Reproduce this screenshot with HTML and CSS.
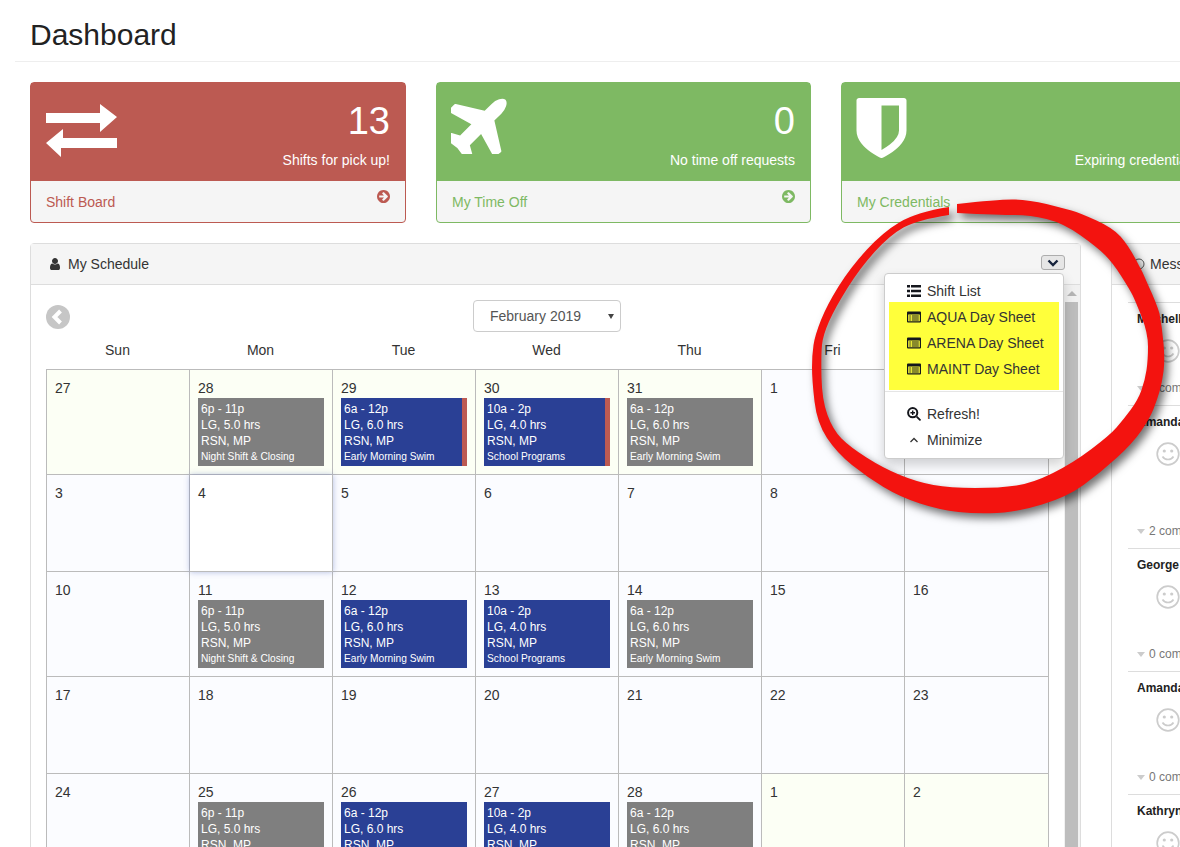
FILE: index.html
```html
<!DOCTYPE html>
<html lang="en">
<head>
    <meta charset="UTF-8">
    <title>Dashboard</title>
    <link rel="stylesheet" href="styles.css">
</head>
<body>
    <div class="page">
        <h1 class="page-title">Dashboard</h1>

        <div class="cards">
            <div class="card card-red">
                <div class="card-head">
                    <svg class="icon-exchange" viewBox="0 0 71 53"><path d="M0 9H54V0L71 13 54 28V19H0ZM71 34H17V25L0 39 15 53V44H71Z"/></svg>
                    <div class="card-info">
                        <div class="card-num">13</div>
                        <div class="card-label">Shifts for pick up!</div>
                    </div>
                </div>
                <div class="card-foot">
                    <span>Shift Board</span>
                    <svg class="icon-go" viewBox="128 128 1536 1536"><path fill-rule="evenodd" d="M1413 896q0-27-18-45l-91-91-362-362q-18-18-45-18t-45 18l-91 91q-18 18-18 45t18 45l189 189h-502q-26 0-45 19t-19 45v128q0 26 19 45t45 19h502l-189 189q-19 19-19 45t19 45l91 91q18 18 45 18t45-18l362-362 91-91q18-18 18-45zm251 0q0 209-103 385.500t-279.500 279.500-385.500 103-385.500-103-279.500-279.500-103-385.500 103-385.500 279.500-279.500 385.500-103 385.500 103 279.500 279.500 103 385.500z"/></svg>
                </div>
            </div>
            <div class="card card-green">
                <div class="card-head">
                    <svg class="icon-plane" viewBox="120 120 1290 1290"><path d="M1376 160q44 52 12 148t-108 172l-161 161 160 696q5 19-12 33l-128 96q-7 6-19 6-4 0-7-1-15-3-21-16l-279-508-259 259 53 194q5 17-8 31l-96 96q-9 9-23 9h-2q-15-2-24-13l-189-252-252-189q-11-7-13-23-1-13 9-25l96-97q9-9 23-9 6 0 8 1l194 53 259-259-508-279q-14-8-17-24-2-16 9-27l128-128q14-13 30-8l665 159 160-160q76-76 172-108t148 12z"/></svg>
                    <div class="card-info">
                        <div class="card-num">0</div>
                        <div class="card-label">No time off requests</div>
                    </div>
                </div>
                <div class="card-foot">
                    <span>My Time Off</span>
                    <svg class="icon-go" viewBox="128 128 1536 1536"><path fill-rule="evenodd" d="M1413 896q0-27-18-45l-91-91-362-362q-18-18-45-18t-45 18l-91 91q-18 18-18 45t18 45l189 189h-502q-26 0-45 19t-19 45v128q0 26 19 45t45 19h502l-189 189q-19 19-19 45t19 45l91 91q18 18 45 18t45-18l362-362 91-91q18-18 18-45zm251 0q0 209-103 385.500t-279.500 279.500-385.500 103-385.500-103-279.500-279.500-103-385.500 103-385.500 279.500-279.500 385.500-103 385.500 103 279.500 279.500 103 385.500z"/></svg>
                </div>
            </div>
            <div class="card card-green">
                <div class="card-head">
                    <svg class="icon-shield" viewBox="256 128 1280 1536"><path d="M1344 960v-640h-448v1137q119-63 213-137 235-184 235-360zm192-768v768q0 86-33.500 170.500t-83 150-118 127.500-126.500 103-121 77.500-89.500 49.500-42.500 20q-12 6-26 6t-26-6q-16-7-42.500-20t-89.500-49.500-121-77.500-126.500-103-118-127.500-83-150-33.500-170.500v-768q0-26 19-45t45-19h1152q26 0 45 19t19 45z"/></svg>
                    <div class="card-info">
                        <div class="card-num">0</div>
                        <div class="card-label">Expiring credentials</div>
                    </div>
                </div>
                <div class="card-foot">
                    <span>My Credentials</span>
                </div>
            </div>
        </div>

        <div class="panels">
            <div class="panel panel-schedule">
                <div class="panel-head">
                    <svg class="icon-user" viewBox="256 128 1280 1536"><path d="M1536 1399q0 109-62.500 187t-150.500 78h-854q-88 0-150.500-78t-62.500-187q0-85 8.500-160.500t31.500-152 58.500-131 94-89 134.500-34.500q131 128 313 128t313-128q76 0 134.500 34.500t94 89 58.500 131 31.500 152 8.500 160.500zm-256-887q0 159-112.500 271.500t-271.500 112.500-271.500-112.500-112.500-271.500 112.500-271.500 271.500-112.500 271.500 112.500 112.500 271.500z"/></svg>
                    <span>My Schedule</span>
                    <button class="collapse-btn"><svg viewBox="0 0 12 8"><path d="M1.500 1.500 6 6l4.500-4.500" /></svg></button>
                </div>

                <div class="menu">
                    <div class="menu-item">
                        <svg class="menu-icon" viewBox="0 0 14 12"><path d="M0 0h3v2.500H0zM4 0h10v2.500H4zM0 4.700h3v2.500H0zM4 4.700h10v2.500H4zM0 9.400h3v2.500H0zM4 9.400h10v2.500H4z"/></svg>
                        Shift List
                    </div>
                    <div class="menu-highlight">
                        <div class="menu-item">
                            <svg class="menu-icon" viewBox="0 0 14 11"><path fill-rule="evenodd" d="M1 0h12a1 1 0 0 1 1 1v9a1 1 0 0 1-1 1H1a1 1 0 0 1-1-1V1a1 1 0 0 1 1-1zM1.200 3v6.800h11.600V3z"/><path d="M2.300 4h1.500v1H2.300zM4.800 4h7v1h-7zM2.300 6h1.500v1H2.300zM4.800 6h7v1h-7zM2.300 8h1.500v1H2.300zM4.800 8h7v1h-7z"/></svg>
                            AQUA Day Sheet
                        </div>
                        <div class="menu-item">
                            <svg class="menu-icon" viewBox="0 0 14 11"><path fill-rule="evenodd" d="M1 0h12a1 1 0 0 1 1 1v9a1 1 0 0 1-1 1H1a1 1 0 0 1-1-1V1a1 1 0 0 1 1-1zM1.200 3v6.800h11.600V3z"/><path d="M2.300 4h1.500v1H2.300zM4.800 4h7v1h-7zM2.300 6h1.500v1H2.300zM4.800 6h7v1h-7zM2.300 8h1.500v1H2.300zM4.800 8h7v1h-7z"/></svg>
                            ARENA Day Sheet
                        </div>
                        <div class="menu-item">
                            <svg class="menu-icon" viewBox="0 0 14 11"><path fill-rule="evenodd" d="M1 0h12a1 1 0 0 1 1 1v9a1 1 0 0 1-1 1H1a1 1 0 0 1-1-1V1a1 1 0 0 1 1-1zM1.200 3v6.800h11.600V3z"/><path d="M2.300 4h1.500v1H2.300zM4.800 4h7v1h-7zM2.300 6h1.500v1H2.300zM4.800 6h7v1h-7zM2.300 8h1.500v1H2.300zM4.800 8h7v1h-7z"/></svg>
                            MAINT Day Sheet
                        </div>
                    </div>
                    <div class="menu-divider"></div>
                    <div class="menu-item">
                        <svg class="menu-icon icon-search" viewBox="0 0 14 14"><circle cx="5.700" cy="5.700" r="4.600" class="search-ring"/><path d="M3.400 5h4.600v1.400H3.400zM5 3.400h1.400v4.600H5zM9 10.200l1.300-1.300 3.300 3.300a.9.9 0 0 1-1.300 1.300z"/></svg>
                        Refresh!
                    </div>
                    <div class="menu-item">
                        <svg class="menu-icon icon-up" viewBox="0 0 14 12"><path d="M3.500 8 7 4.500 10.500 8"/></svg>
                        Minimize
                    </div>
                </div>

                <div class="panel-body">
                    <div class="calendar">
                        <div class="cal-top">
                            <svg class="icon-prev" viewBox="0 0 24 24"><circle cx="12" cy="12" r="12"/><path d="M14.500 6 8.500 12l6 6"/></svg>
                            <div class="month-select">February 2019<span class="caret"></span></div>
                        </div>
                        <div class="cal-days">
                            <div>Sun</div><div>Mon</div><div>Tue</div><div>Wed</div><div>Thu</div><div>Fri</div><div>Sat</div>
                        </div>
                        <div class="cal-grid">
                            <div class="cell other">27</div>
                            <div class="cell other">28
                                <div class="shift gray"><div class="shift-text">6p - 11p<br>LG, 5.0 hrs<br>RSN, MP<small>Night Shift &amp; Closing</small></div></div>
                            </div>
                            <div class="cell other">29
                                <div class="shift blue flagged"><div class="shift-text">6a - 12p<br>LG, 6.0 hrs<br>RSN, MP<small>Early Morning Swim</small></div></div>
                            </div>
                            <div class="cell other">30
                                <div class="shift blue flagged"><div class="shift-text">10a - 2p<br>LG, 4.0 hrs<br>RSN, MP<small>School Programs</small></div></div>
                            </div>
                            <div class="cell other">31
                                <div class="shift gray"><div class="shift-text">6a - 12p<br>LG, 6.0 hrs<br>RSN, MP<small>Early Morning Swim</small></div></div>
                            </div>
                            <div class="cell">1</div>
                            <div class="cell">2</div>

                            <div class="cell">3</div>
                            <div class="cell today">4</div>
                            <div class="cell">5</div>
                            <div class="cell">6</div>
                            <div class="cell">7</div>
                            <div class="cell">8</div>
                            <div class="cell">9</div>

                            <div class="cell">10</div>
                            <div class="cell">11
                                <div class="shift gray"><div class="shift-text">6p - 11p<br>LG, 5.0 hrs<br>RSN, MP<small>Night Shift &amp; Closing</small></div></div>
                            </div>
                            <div class="cell">12
                                <div class="shift blue"><div class="shift-text">6a - 12p<br>LG, 6.0 hrs<br>RSN, MP<small>Early Morning Swim</small></div></div>
                            </div>
                            <div class="cell">13
                                <div class="shift blue"><div class="shift-text">10a - 2p<br>LG, 4.0 hrs<br>RSN, MP<small>School Programs</small></div></div>
                            </div>
                            <div class="cell">14
                                <div class="shift gray"><div class="shift-text">6a - 12p<br>LG, 6.0 hrs<br>RSN, MP<small>Early Morning Swim</small></div></div>
                            </div>
                            <div class="cell">15</div>
                            <div class="cell">16</div>

                            <div class="cell">17</div>
                            <div class="cell">18</div>
                            <div class="cell">19</div>
                            <div class="cell">20</div>
                            <div class="cell">21</div>
                            <div class="cell">22</div>
                            <div class="cell">23</div>

                            <div class="cell">24</div>
                            <div class="cell">25
                                <div class="shift gray"><div class="shift-text">6p - 11p<br>LG, 5.0 hrs<br>RSN, MP<small>Night Shift &amp; Closing</small></div></div>
                            </div>
                            <div class="cell">26
                                <div class="shift blue"><div class="shift-text">6a - 12p<br>LG, 6.0 hrs<br>RSN, MP<small>Early Morning Swim</small></div></div>
                            </div>
                            <div class="cell">27
                                <div class="shift blue"><div class="shift-text">10a - 2p<br>LG, 4.0 hrs<br>RSN, MP<small>School Programs</small></div></div>
                            </div>
                            <div class="cell">28
                                <div class="shift gray"><div class="shift-text">6a - 12p<br>LG, 6.0 hrs<br>RSN, MP<small>Early Morning Swim</small></div></div>
                            </div>
                            <div class="cell other">1</div>
                            <div class="cell other">2</div>
                        </div>
                    </div>
                    <div class="scrollbar">
                        <div class="scroll-up"></div>
                        <div class="scroll-thumb"></div>
                    </div>
                </div>
            </div>

            <div class="panel panel-messages">
                <div class="panel-head">
                    <svg class="icon-msg" viewBox="0 0 12 12"><circle cx="6" cy="6" r="5"/></svg>
                    <span>Messages</span>
                </div>
                <div class="msg-list">
                    <div class="msg msg-short">
                        <div class="msg-name">Mitchell</div>
                        <svg class="smile" viewBox="0 0 24 24"><circle cx="12" cy="12" r="10.800"/><circle class="eye" cx="8.300" cy="9" r="1.600"/><circle class="eye" cx="15.700" cy="9" r="1.600"/><path d="M6.500 14.500c2.500 4 8.500 4 11 0"/></svg>
                        <div class="msg-comments">1 comments</div>
                    </div>
                    <div class="msg msg-tall">
                        <div class="msg-name">Amanda</div>
                        <svg class="smile" viewBox="0 0 24 24"><circle cx="12" cy="12" r="10.800"/><circle class="eye" cx="8.300" cy="9" r="1.600"/><circle class="eye" cx="15.700" cy="9" r="1.600"/><path d="M6.500 14.500c2.500 4 8.500 4 11 0"/></svg>
                        <div class="msg-comments">2 comments</div>
                    </div>
                    <div class="msg">
                        <div class="msg-name">George</div>
                        <svg class="smile" viewBox="0 0 24 24"><circle cx="12" cy="12" r="10.800"/><circle class="eye" cx="8.300" cy="9" r="1.600"/><circle class="eye" cx="15.700" cy="9" r="1.600"/><path d="M6.500 14.500c2.500 4 8.500 4 11 0"/></svg>
                        <div class="msg-comments">0 comments</div>
                    </div>
                    <div class="msg">
                        <div class="msg-name">Amanda</div>
                        <svg class="smile" viewBox="0 0 24 24"><circle cx="12" cy="12" r="10.800"/><circle class="eye" cx="8.300" cy="9" r="1.600"/><circle class="eye" cx="15.700" cy="9" r="1.600"/><path d="M6.500 14.500c2.500 4 8.500 4 11 0"/></svg>
                        <div class="msg-comments">0 comments</div>
                    </div>
                    <div class="msg">
                        <div class="msg-name">Kathryn</div>
                        <svg class="smile" viewBox="0 0 24 24"><circle cx="12" cy="12" r="10.800"/><circle class="eye" cx="8.300" cy="9" r="1.600"/><circle class="eye" cx="15.700" cy="9" r="1.600"/><path d="M6.500 14.500c2.500 4 8.500 4 11 0"/></svg>
                        <div class="msg-comments">0 comments</div>
                    </div>
                </div>
            </div>
        </div>
    </div>

    <!-- hand drawn ring on top of the screenshot -->
    <svg class="ring" viewBox="0 0 1180 847">
        <path d="M957 204Q1000 199 1015 199.500Q1030 200 1046.500 204Q1063 208 1071.500 210.500Q1080 213 1096.500 220.500Q1113 228 1120.500 236.500Q1128 245 1135 258Q1143 272 1149 287Q1156 302 1159.500 313.500Q1162 327 1163.500 343.500Q1165 360 1163.500 371.500Q1162 383 1159.500 391.500Q1157 400 1153.500 409Q1150 418 1141.500 430.500Q1133 443 1116.500 458Q1100 473 1083.500 485Q1067 497 1042 504.500Q1017 512 997 513Q977 514 958.500 512Q940 510 920 503.500Q900 497 883.500 487Q867 477 852 465Q837 453 827 438Q817 423 814.500 401.500Q812 380 812 367.500Q812 355 813.500 345Q815 335 821 320Q827 305 838.500 286.500Q850 268 866.500 250Q883 232 900 222Q917 212 949 207L949 215Q917 220 903.500 227.500Q890 235 875 251.500Q860 268 847.500 288Q835 308 829 321.500Q823 335 822 345Q821 355 821.500 377.500Q822 400 827.500 415Q833 430 841.500 438.500Q850 447 866.500 457.500Q883 468 900 475Q917 482 933.500 485Q950 488 975 488Q1000 488 1016.500 485.500Q1033 483 1053 473Q1073 463 1091.500 449Q1110 435 1116.500 427.500Q1123 420 1130.500 410Q1138 400 1141.500 390Q1145 380 1146.500 370Q1148 360 1148 346.500Q1148 333 1141.500 316.500Q1135 300 1132.500 295Q1130 290 1121.500 276.500Q1113 263 1105 255Q1097 247 1080 235Q1063 223 1046.500 219Q1030 215 1015 215Q1000 215 957 213Z"/>
    </svg>
</body>
</html>
```

FILE: styles.css
```css
html, body {
    height: 847px;
    margin: 0;
    overflow: hidden;
}
body {
    position: relative;
    font-family: "Liberation Sans", Arial, sans-serif;
    font-size: 14px;
    line-height: 20px;
    color: #333;
    background-color: #fff;
}
.page {
    width: 1500px;
    padding-left: 15px;
}
.page-title {
    margin: 0 0 20px;
    height: 61px;
    padding-left: 15px;
    border-bottom: 1px solid #eee;
    font-size: 30px;
    font-weight: normal;
    line-height: 70px;
    color: #222;
}

/* top cards */
.cards {
    display: grid;
    grid-template-columns: 376px 375px 375px;
    column-gap: 30px;
    margin-left: 15px;
}
.card {
    height: 141px;
    box-sizing: border-box;
    border: 1px solid;
    border-radius: 4px;
    background-color: #f5f5f5;
}
.card-red {
    border-color: #bc5a52;
    color: #bc5a52;
}
.card-green {
    border-color: #7eb963;
    color: #7eb963;
}
.card-head {
    display: flex;
    justify-content: space-between;
    height: 98px;
    box-sizing: border-box;
    padding: 15px;
    color: #fff;
}
.card-red .card-head {
    background-color: #bc5a52;
}
.card-green .card-head {
    background-color: #7eb963;
}
.card-head svg {
    fill: #fff;
}
.card:last-child .card-label {
    margin-right: 3px;
}
.card:last-child .card-num {
    margin-right: -3px;
}
.icon-exchange {
    width: 71px;
    height: 53px;
    margin-top: 6px;
}
.icon-plane {
    width: 56px;
    height: 56px;
    margin-left: -1px;
}
.icon-shield {
    width: 51px;
    height: 60px;
    margin-left: -1px;
}
.card-info {
    text-align: right;
}
.card-num {
    font-size: 38px;
    line-height: 46px;
}
.card-label {
    margin-top: 6px;
}
.card-foot {
    display: flex;
    justify-content: space-between;
    padding: 11px 15px 9px;
}
.icon-go {
    width: 13px;
    height: 13px;
    margin-top: -2px;
    fill: currentColor;
}

/* panels */
.panels {
    display: flex;
    gap: 30px;
    margin: 20px 0 0 15px;
}
.panel {
    position: relative;
    box-sizing: border-box;
    border: 1px solid #ddd;
    border-radius: 4px 4px 0 0;
}
.panel-schedule {
    flex: 0 0 1051px;
}
.panel-messages {
    flex: 0 0 375px;
}
.panel-head {
    display: flex;
    align-items: center;
    height: 41px;
    box-sizing: border-box;
    padding: 0 15px 0 19px;
    border-bottom: 1px solid #ddd;
    background-color: #f5f5f5;
}
.icon-user {
    width: 10px;
    height: 12px;
    margin-right: 8px;
    fill: #333;
}
.collapse-btn {
    display: flex;
    align-items: center;
    justify-content: center;
    width: 24px;
    height: 15px;
    margin: -3px 0 0 auto;
    padding: 0;
    border: 1px solid #adadad;
    border-radius: 3px;
    background-color: #e6e6e6;
}
.collapse-btn svg {
    width: 12px;
    height: 8px;
    fill: none;
    stroke: #16233c;
    stroke-width: 2.400;
}

/* dropdown over the panel */
.menu {
    position: absolute;
    top: 29px;
    right: 16px;
    z-index: 5;
    width: 180px;
    height: 186px;
    box-sizing: border-box;
    padding: 4px 0;
    border: 1px solid #ccc;
    border-radius: 4px;
    background-color: #fff;
    box-shadow: 0 6px 12px rgba(0, 0, 0, 0.175);
}
.menu-item {
    display: flex;
    align-items: center;
    height: 26px;
    padding-left: 22px;
}
.menu-icon {
    width: 14px;
    height: 12px;
    margin-right: 6px;
    fill: #14161c;
}
.icon-search {
    height: 14px;
}
.search-ring {
    fill: none;
    stroke: #14161c;
    stroke-width: 2;
}
.icon-up {
    fill: none;
    stroke: #333;
    stroke-width: 1.300;
}
.menu-highlight {
    height: 88px;
    box-sizing: border-box;
    margin: -2px 4px 0;
    padding-top: 2px;
    background-color: #ffff3b;
}
.menu-highlight .menu-item {
    padding-left: 18px;
}
.menu-divider {
    height: 1px;
    margin: 1px 0 9px;
    background-color: #e5e5e5;
}

/* calendar */
.panel-body {
    display: flex;
}
.calendar {
    flex: 1;
    padding-left: 15px;
}
.cal-top {
    display: flex;
    align-items: center;
    height: 48px;
    padding-top: 15px;
    box-sizing: border-box;
    position: relative;
}
.icon-prev {
    width: 24px;
    height: 24px;
    fill: #c6c6c6;
    stroke: #fff;
    stroke-width: 4;
}
.icon-prev circle {
    stroke: none;
}
.icon-prev path {
    fill: none;
}
.month-select {
    position: relative;
    width: 148px;
    height: 32px;
    box-sizing: border-box;
    margin: -2px 0 0 403px;
    padding: 5px 16px;
    border: 1px solid #ccc;
    border-radius: 4px;
    color: #555;
}
.caret {
    position: absolute;
    top: 13px;
    right: 6px;
    border-top: 5px solid #444;
    border-left: 3px solid transparent;
    border-right: 3px solid transparent;
}
.cal-days {
    display: grid;
    grid-template-columns: repeat(7, 143px);
    height: 36px;
    padding-top: 7px;
    box-sizing: border-box;
    text-align: center;
}
.cal-grid {
    display: grid;
    grid-template-columns: repeat(6, 143px) 144px;
    width: 1003px;
    border-top: 1px solid #bbb;
    border-left: 1px solid #bbb;
}
.cell {
    min-height: 97px;
    box-sizing: border-box;
    padding: 8px;
    border-right: 1px solid #bbb;
    border-bottom: 1px solid #bbb;
    background-color: #fbfcff;
}
.cell.other {
    background-color: #fcfff5;
}
.cell.today {
    position: relative;
    background-color: #fff;
    box-shadow: 0 0 6px rgba(90, 110, 190, 0.45);
}
.shift {
    display: flex;
    height: 68px;
    color: #fff;
}
.shift.gray {
    background-color: #7f7f7f;
}
.shift.blue {
    background-color: #2a4095;
}
.shift.flagged {
    border-right: 5px solid #bc5a52;
}
.shift-text {
    padding: 3px 0 0 3px;
    font-size: 12px;
    line-height: 16px;
}
.shift-text small {
    display: block;
    font-size: 10.200px;
    line-height: 15px;
}
.scrollbar {
    flex: 0 0 16px;
    background-color: #f1f1f1;
}
.scroll-up {
    width: 0;
    margin: 6px auto 6px;
    border-bottom: 5px solid #b5b5b5;
    border-left: 5px solid transparent;
    border-right: 5px solid transparent;
}
.scroll-thumb {
    width: 13px;
    height: 700px;
    margin-left: 1px;
    background-color: #bdbdbd;
}

/* messages */
.icon-msg {
    width: 12px;
    height: 12px;
    margin: 0 5px 0 2px;
    fill: none;
    stroke: #555;
}
.msg-list {
    padding: 17px 0 0 16px;
}
.msg {
    display: flex;
    flex-direction: column;
    height: 123px;
    box-sizing: border-box;
    padding: 6px 0 7px 9px;
    border-top: 1px solid #ddd;
}
.msg-short {
    height: 103px;
}
.msg-tall {
    height: 143px;
}
.msg-name {
    font-size: 12px;
    font-weight: bold;
    line-height: 20px;
    color: #222;
}
.smile {
    width: 24px;
    height: 24px;
    margin: 10px 0 0 19px;
    fill: none;
    stroke: #ccc;
    stroke-width: 1.700;
}
.smile .eye {
    fill: #ccc;
    stroke: none;
}
.msg-comments {
    position: relative;
    margin-top: auto;
    padding-left: 12px;
    font-size: 12px;
    color: #777;
}
.msg-comments::before {
    content: "";
    position: absolute;
    top: 8px;
    left: 0;
    border-top: 5px solid #ccc;
    border-left: 4px solid transparent;
    border-right: 4px solid transparent;
}

/* the red ring is drawn over everything */
.ring {
    position: absolute;
    top: 0;
    left: 0;
    z-index: 10;
    width: 1180px;
    height: 847px;
    fill: #f3130f;
    filter: drop-shadow(4px 5px 4px rgba(0, 0, 0, 0.55));
}
```
